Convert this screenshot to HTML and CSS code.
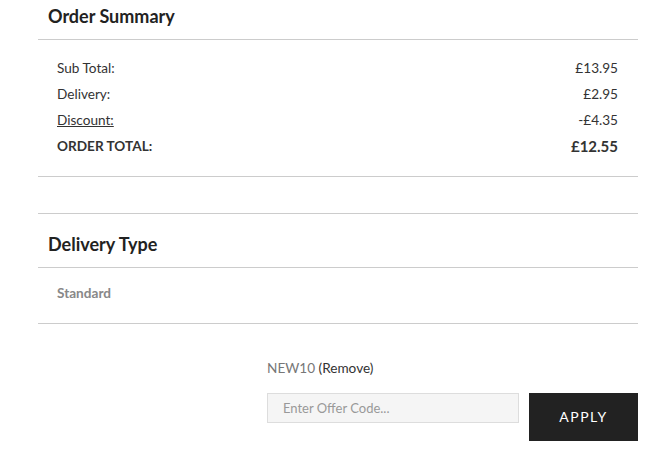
FILE: index.html
```html
<!DOCTYPE html>
<html>
<head>
<meta charset="utf-8">
<link rel="stylesheet" href="styles.css">
</head>
<body>
<div class="wrap">
  <section class="summary">
    <h2 class="title">Order Summary</h2>
    <div class="rows">
      <div class="row"><span>Sub Total:</span><span>£13.95</span></div>
      <div class="row"><span>Delivery:</span><span>£2.95</span></div>
      <div class="row"><span class="u">Discount:</span><span>-£4.35</span></div>
      <div class="row total"><span>ORDER TOTAL:</span><span class="big">£12.55</span></div>
    </div>
  </section>
  <section class="delivery">
    <h2 class="title2">Delivery Type</h2>
    <div class="dtype">Standard</div>
  </section>
  <div class="offer">
    <div class="code"><span class="cname">NEW10</span> <span class="remove">(Remove)</span></div>
    <div class="form">
      <div class="input">Enter Offer Code...</div>
      <button class="apply">APPLY</button>
    </div>
  </div>
</div>
</body>
</html>
```
FILE: styles.css
```css
* { box-sizing: border-box; }
body { margin: 0; font-family: Lato, "Open Sans", sans-serif; color: #333; background: #fff; }
.wrap { margin-left: 38px; width: 600px; }
.title { margin: 0; font-size: 18px; font-weight: 700; color: #222; line-height: 32px; padding: 0 0 7px 10px; border-bottom: 1px solid #ccc; height: 40px; }
.rows { padding: 15px 20px 17px 19px; border-bottom: 1px solid #ccc; }
.row { display: flex; justify-content: space-between; font-size: 13.6px; line-height: 26px; }
.u { text-decoration: underline; }
.total { font-weight: 700; }
.big { font-size: 15px; }
.delivery { margin-top: 36px; border-top: 1px solid #ccc; }
.title2 { margin: 0; font-size: 18px; font-weight: 700; color: #222; line-height: 24px; padding: 18px 0 11px 10px; border-bottom: 1px solid #ccc; }
.dtype { font-size: 13.6px; font-weight: 700; color: #888; line-height: 26px; padding: 12px 0 17px 19px; border-bottom: 1px solid #ccc; }
.offer { margin-left: 229px; padding-top: 35px; }
.code { font-size: 13.6px; line-height: 18px; }
.cname { color: #777; }
.remove { color: #333; }
.form { display: flex; gap: 10px; margin-top: 16px; align-items: flex-start; }
.input { width: 252px; height: 30px; border: 1px solid #ddd; background: #f5f5f5; color: #999; font-size: 13px; line-height: 28px; padding-left: 15px; }
.apply { width: 109px; height: 48px; background: #222; color: #fff; border: 0; font-family: Lato, sans-serif; font-size: 14px; letter-spacing: 1.5px; padding: 0 0 2px; }
```
